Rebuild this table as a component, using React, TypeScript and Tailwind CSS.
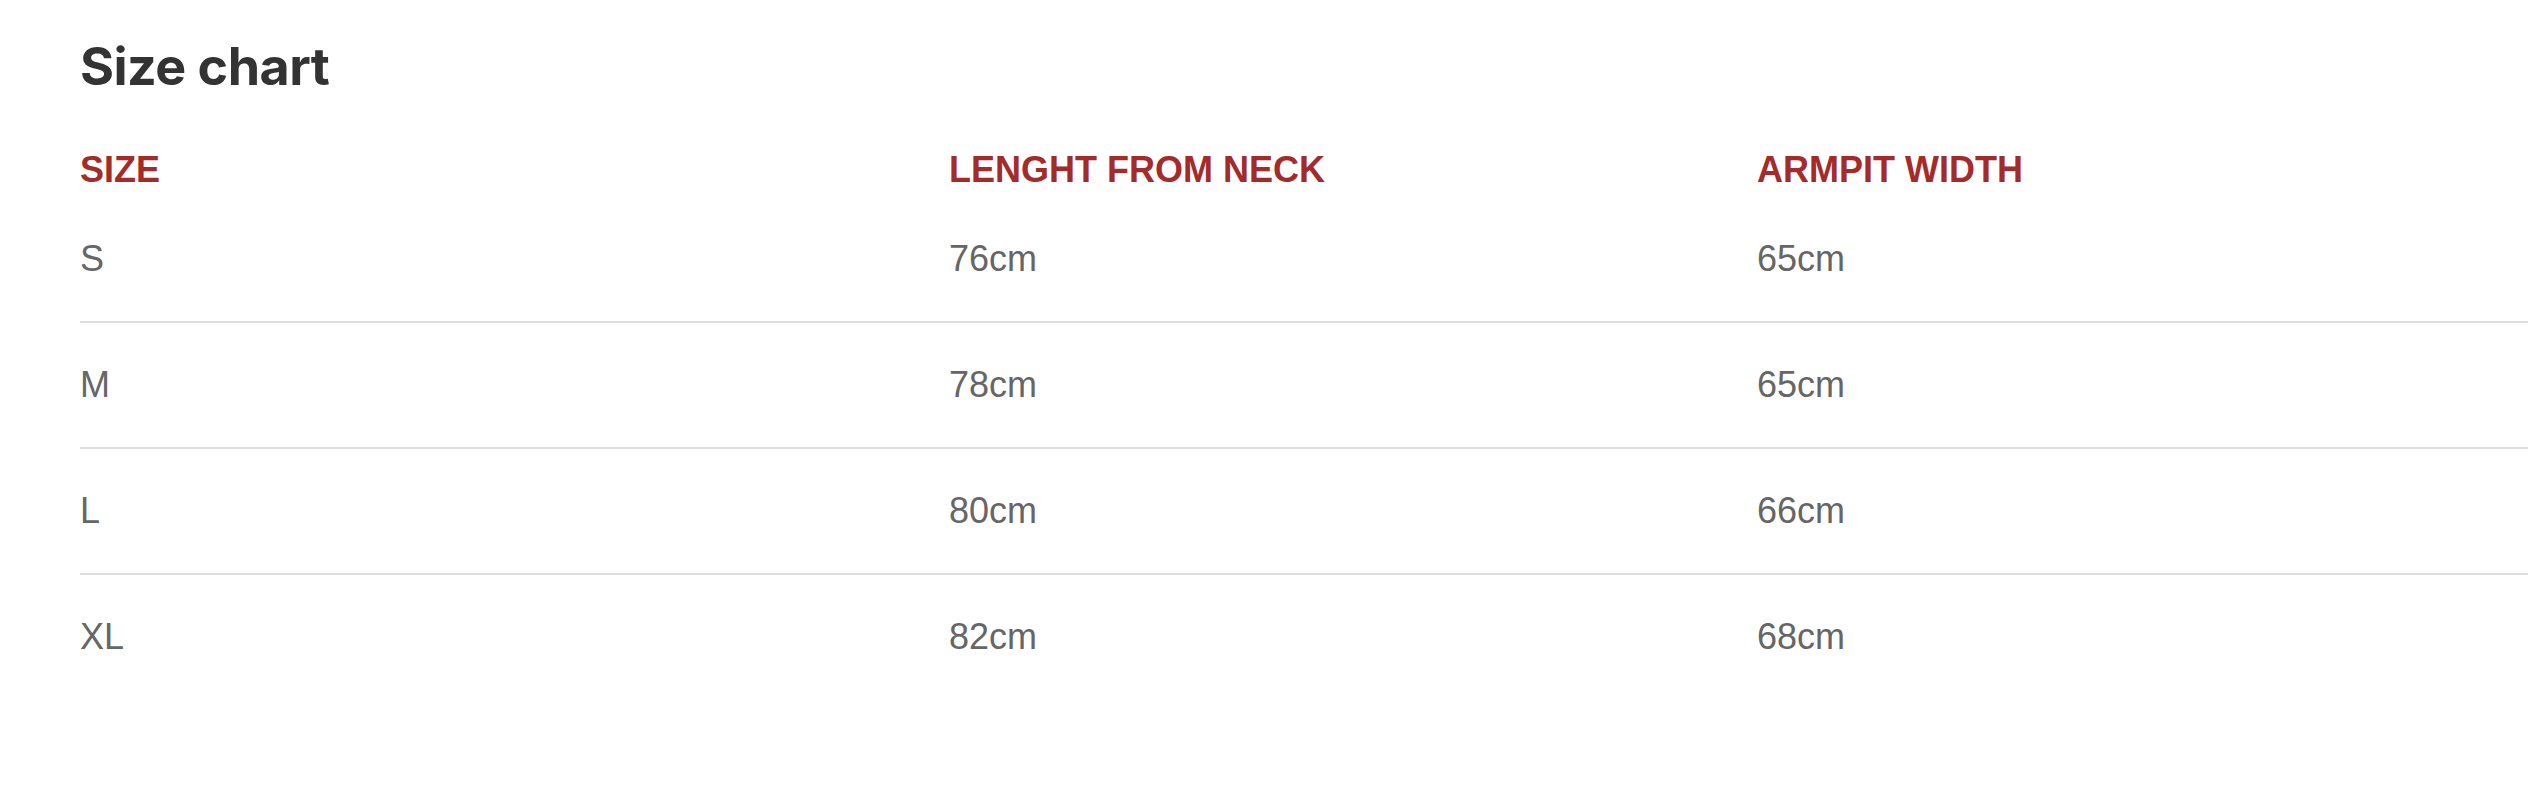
const rows = [
  { size: "S", length: "76cm", armpit: "65cm" },
  { size: "M", length: "78cm", armpit: "65cm" },
  { size: "L", length: "80cm", armpit: "66cm" },
  { size: "XL", length: "82cm", armpit: "68cm" },
];

export default function App() {
  return (
    <main className="min-h-screen bg-white pl-[80px] pr-[20px] pt-[37px] font-['Liberation_Sans',Arial,sans-serif]">
      <h1 className="font-['Inter',sans-serif] text-[52px] font-bold leading-[60px] tracking-[-0.01em] text-[#333333]">
        Size chart
      </h1>

      <div className="mt-[53px]">
        <div className="grid grid-cols-[869px_808px_1fr] pb-[7px] text-[36px] font-bold leading-[40px] text-[#a52b2b]">
          <div>SIZE</div>
          <div>LENGHT FROM NECK</div>
          <div>ARMPIT WIDTH</div>
        </div>

        {rows.map((row, i) => (
          <div
            key={row.size}
            className={
              i === 0
                ? "grid grid-cols-[869px_808px_1fr] py-[42px] text-[36px] leading-[40px] text-[#666666]"
                : "grid grid-cols-[869px_808px_1fr] border-t-2 border-[#dddddd] py-[42px] text-[36px] leading-[40px] text-[#666666]"
            }
          >
            <div>{row.size}</div>
            <div>{row.length}</div>
            <div>{row.armpit}</div>
          </div>
        ))}
      </div>
    </main>
  );
}
